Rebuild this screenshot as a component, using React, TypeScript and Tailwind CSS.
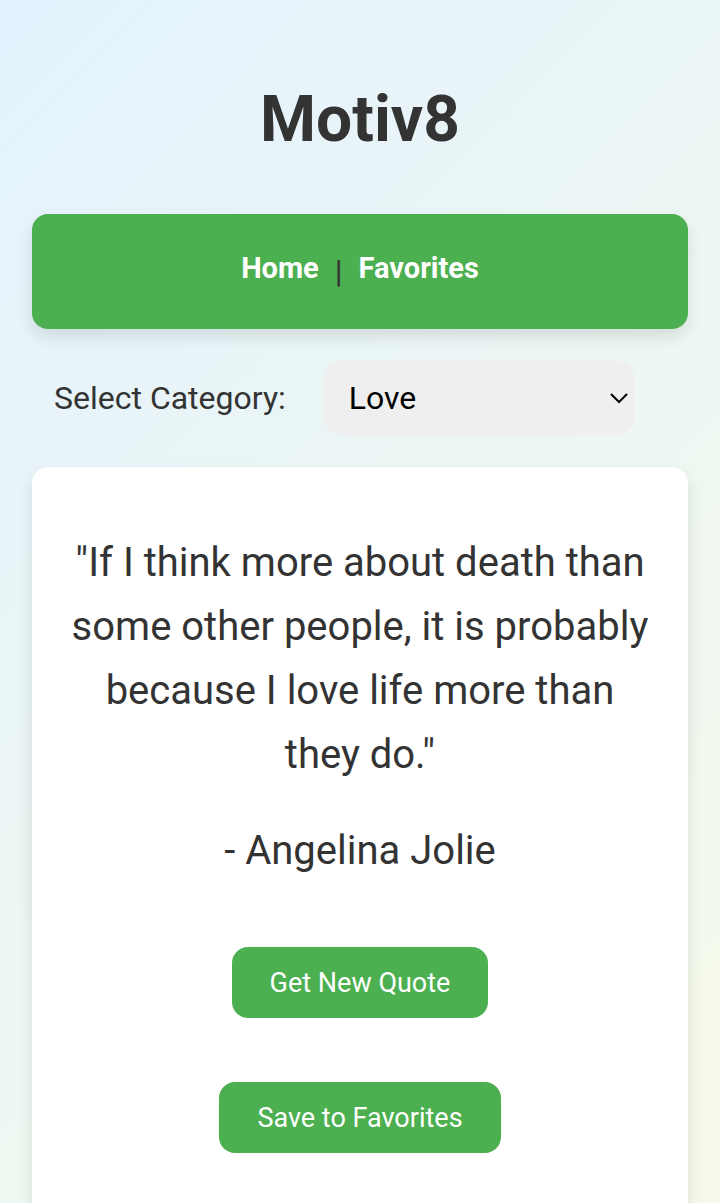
import { useState } from "react";

const categories = ["Love", "Life", "Success", "Happiness"];

export default function App() {
  const [category, setCategory] = useState("Love");

  return (
    <div className="h-screen overflow-y-auto font-['Roboto',sans-serif] text-[#333] [scrollbar-width:none]">
      <div className="min-h-full bg-linear-135 from-[#e3f2fd] to-[#f9fbe7] px-8 pt-20 pb-32">
        <h1 className="text-center text-[64px] leading-[80px] font-bold">Motiv8</h1>

        <nav className="mt-[54px] flex h-[115px] items-center justify-center gap-4 rounded-2xl bg-[#4caf50] pb-2 text-[29px] leading-9 shadow-[0_8px_16px_rgba(0,0,0,0.1)]">
          <a href="#home" className="font-bold text-white">Home</a>
          <span className="pt-1.5 text-[32px]">|</span>
          <a href="#favorites" className="font-bold text-white">Favorites</a>
        </nav>

        <div className="mt-8 flex items-center pl-[22px] text-[32px]">
          <label htmlFor="category" className="mr-[38px] leading-[38px]">Select Category:</label>
          <div className="relative">
            <select
              id="category"
              value={category}
              onChange={(event) => setCategory(event.target.value)}
              className="h-[74px] w-[310px] appearance-none rounded-2xl bg-[#efefef] pl-[25px] text-black"
            >
              {categories.map((name) => (
                <option key={name}>{name}</option>
              ))}
            </select>
            <svg
              className="pointer-events-none absolute top-8 right-1.5 h-3 w-[18px]"
              viewBox="0 0 18 12"
              fill="none"
              stroke="black"
              strokeWidth="2"
              aria-hidden="true"
            >
              <path d="M1 1 9 9 17 1" />
            </svg>
          </div>
        </div>

        <main className="mt-8 flex flex-col items-center rounded-2xl bg-white px-8 pt-16 pb-40 text-center text-[40px] leading-[64px] shadow-[0_8px_16px_rgba(0,0,0,0.1)]">
          <p>"If I think more about death than some other people, it is probably because I love life more than they do."</p>
          <p className="mt-8">- Angelina Jolie</p>
          <button className="mt-16 h-[71px] rounded-2xl bg-[#4caf50] px-[38px] text-[27px] leading-8 text-white">Get New Quote</button>
          <button className="mt-16 h-[71px] rounded-2xl bg-[#4caf50] px-[38px] text-[27px] leading-8 text-white">Save to Favorites</button>
        </main>
      </div>
    </div>
  );
}
